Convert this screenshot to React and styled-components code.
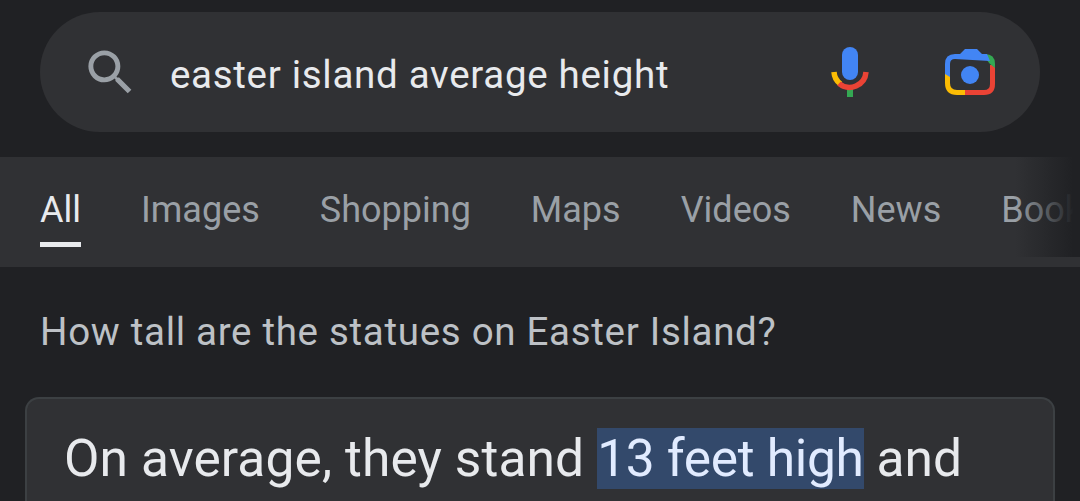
import React from 'react'
import styled, { createGlobalStyle } from 'styled-components'

const GlobalStyle = createGlobalStyle`
  html, body {
    margin: 0;
    padding: 0;
    height: 501px;
    overflow: hidden;
    background: #202124;
    font-family: Roboto, "Liberation Sans", sans-serif;
  }
`

const Page = styled.div`
  width: 1080px;
  height: 501px;
  overflow: hidden;
  padding-top: 12px;
  box-sizing: border-box;
`

const SearchBar = styled.div`
  display: flex;
  align-items: center;
  height: 120px;
  margin: 0 40px;
  padding: 0 45px;
  background: #303134;
  border-radius: 60px;
`

const SearchIcon = styled.svg`
  width: 59px;
  height: 59px;
  flex: none;
  margin-left: -4px;
`

const Query = styled.div`
  flex: 1;
  margin: 5px 0 0 30px;
  font-size: 38.5px;
  line-height: 44px;
  letter-spacing: 0.7px;
  color: #e8eaed;
  white-space: nowrap;
`

const MicIcon = styled.svg`
  width: 38px;
  height: 50px;
  flex: none;
  margin-right: 76px;
`

const LensIcon = styled.svg`
  width: 50px;
  height: 46px;
  flex: none;
`

const TabBar = styled.nav`
  position: relative;
  display: flex;
  gap: 60px;
  height: 110px;
  margin-top: 25px;
  padding-left: 40px;
  background: #303134;
  overflow: hidden;
`

const Tab = styled.div`
  position: relative;
  flex: none;
  padding-top: 32px;
  font-size: 36px;
  line-height: 42px;
  color: ${({ $active }) => ($active ? '#e8eaed' : '#9aa0a6')};

  ${({ $active }) => $active && `
    &::after {
      content: '';
      position: absolute;
      left: 0;
      right: 0;
      top: 85px;
      height: 5px;
      background: #e8eaed;
    }
  `}
`

const TabFade = styled.div`
  position: absolute;
  top: 0;
  right: 0;
  width: 65px;
  height: 100px;
  background: linear-gradient(to right, rgba(32, 33, 36, 0), #202124 90%);
`

const Question = styled.div`
  margin: 44px 0 0 40px;
  font-size: 38.5px;
  line-height: 42px;
  letter-spacing: 0.7px;
  color: #bdc1c6;
  white-space: nowrap;
`

const AnswerCard = styled.section`
  margin: 44px 25px 0;
  height: 200px;
  padding: 29px 37px 0;
  background: #303134;
  border: 2px solid #3c4043;
  border-bottom: none;
  border-radius: 14px 14px 0 0;
  box-sizing: border-box;
`

const AnswerText = styled.p`
  margin: 0;
  font-size: 51.5px;
  line-height: 62px;
  letter-spacing: 0.1px;
  color: #e8eaed;
  white-space: nowrap;
`

const Highlight = styled.mark`
  background: #33496b;
  color: #e1ebff;
  letter-spacing: -0.33px;
`

export default function App() {
  return (
    <>
      <GlobalStyle />
      <Page>
        <SearchBar>
          <SearchIcon viewBox="0 0 24 24">
            <path
              fill="#9aa0a6"
              d="M15.5 14h-.79l-.28-.27A6.47 6.47 0 0 0 16 9.5 6.5 6.5 0 1 0 9.5 16c1.61 0 3.09-.59 4.23-1.57l.27.28v.79l5 4.99L20.49 19l-4.99-5zm-6 0C7.01 14 5 11.99 5 9.5S7.01 5 9.5 5 14 7.01 14 9.5 11.99 14 9.5 14z"
            />
          </SearchIcon>
          <Query>easter island average height</Query>
          <MicIcon viewBox="0 0 38 50">
            <rect x="11" y="0" width="16" height="33" rx="8" fill="#4285f4" />
            <rect x="16" y="41" width="6" height="9" fill="#34a853" />
            <path d="M3 25a16 16 0 0 0 6.500 12" fill="none" stroke="#fbbc04" strokeWidth="5.500" />
            <path d="M8 36.500a16.500 16.500 0 0 0 27-11.500" fill="none" stroke="#ea4335" strokeWidth="5.500" />
          </MicIcon>
          <LensIcon viewBox="0 0 50 46">
            <path d="M2.500 24 L2.500 34 Q2.500 43.500 12 43.500 L22 43.500" fill="none" stroke="#fbbc04" strokeWidth="5" />
            <path d="M20 43.500 L39 43.500 Q47.500 43.500 47.500 35 L47.500 16" fill="none" stroke="#ea4335" strokeWidth="5" />
            <path d="M37 5 L40 5 Q50 5 50 15 L50 19 L45 15 Z" fill="#34a853" />
            <path
              fill="#4285f4"
              d="M0 25 L0 15 Q0 5 10 5 L15 5 L20 0 L32 0 L37 5 L42 5 L45 12 L10 10 Q5 10 5 15 L5 28 Z"
            />
            <circle cx="25" cy="26" r="9" fill="#4285f4" />
          </LensIcon>
        </SearchBar>

        <TabBar>
          <Tab $active>All</Tab>
          <Tab>Images</Tab>
          <Tab>Shopping</Tab>
          <Tab>Maps</Tab>
          <Tab>Videos</Tab>
          <Tab>News</Tab>
          <Tab>Books</Tab>
          <TabFade />
        </TabBar>

        <Question>How tall are the statues on Easter Island?</Question>

        <AnswerCard>
          <AnswerText>
            On average, they stand <Highlight>13 feet high</Highlight> and
          </AnswerText>
        </AnswerCard>
      </Page>
    </>
  )
}
